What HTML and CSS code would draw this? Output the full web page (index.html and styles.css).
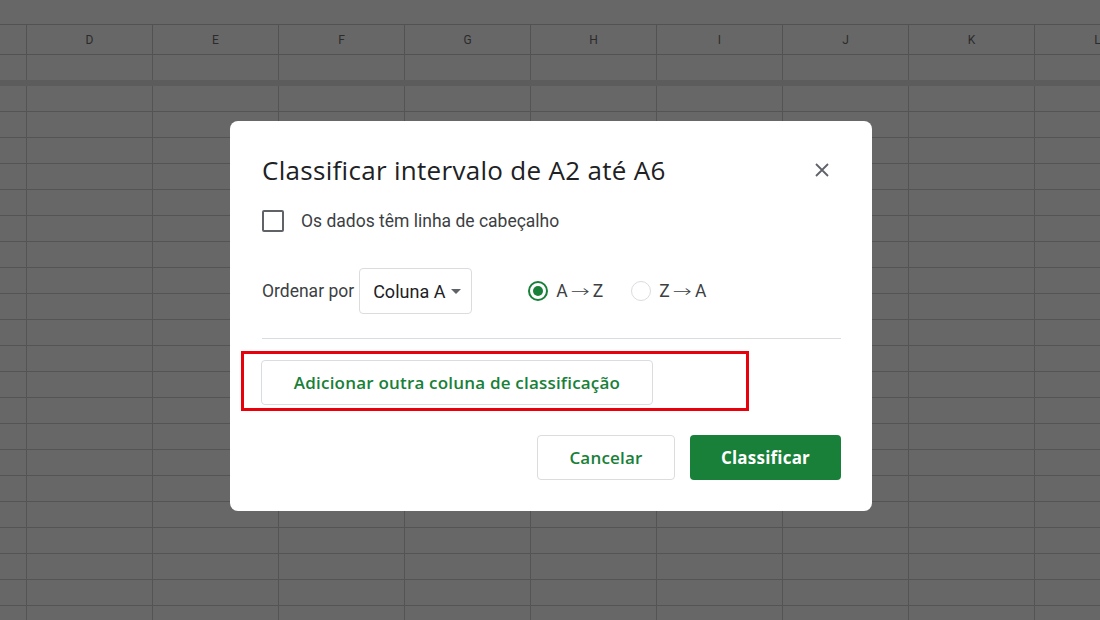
FILE: index.html
```html
<!DOCTYPE html>
<html lang="pt">
<head>
  <meta charset="UTF-8">
  <title>Classificar intervalo</title>
  <link rel="stylesheet" href="styles.css">
</head>
<body>
  <div class="sheet">
    <div class="topbar"></div>
    <div class="colhead">
      <div class="col first"></div>
      <div class="col">D</div>
      <div class="col">E</div>
      <div class="col">F</div>
      <div class="col">G</div>
      <div class="col">H</div>
      <div class="col">I</div>
      <div class="col">J</div>
      <div class="col">K</div>
      <div class="col">L</div>
    </div>
    <div class="frozen-row"></div>
    <div class="freeze-bar"></div>
    <div class="rows"></div>
  </div>

  <div class="dialog">
    <div class="dialog-head">
      <h1>Classificar intervalo de A2 até A6</h1>
      <button class="close" aria-label="Fechar">
        <svg width="14" height="14" viewBox="0 0 14 14"><path d="M1 1 L13 13 M13 1 L1 13" stroke="#5f6368" stroke-width="1.8" fill="none"/></svg>
      </button>
    </div>

    <label class="check">
      <span class="box"></span>
      <span>Os dados têm linha de cabeçalho</span>
    </label>

    <div class="sort-row">
      <span class="sort-label">Ordenar por</span>
      <div class="select">
        <span>Coluna A</span>
        <span class="caret"></span>
      </div>
      <div class="radios">
        <label class="radio on"><span class="dot"></span>A<span class="arrow">→</span>Z</label>
        <label class="radio"><span class="dot"></span>Z<span class="arrow">→</span>A</label>
      </div>
    </div>

    <div class="divider"></div>

    <div class="add-wrap">
      <button class="btn add">Adicionar outra coluna de classificação</button>
    </div>

    <div class="actions">
      <button class="btn cancel">Cancelar</button>
      <button class="btn primary">Classificar</button>
    </div>
  </div>
</body>
</html>
```

FILE: styles.css
```css
body {
  margin: 0;
  width: 1100px;
  height: 620px;
  overflow: hidden;
  background: #676767;
  font-family: Roboto, "Liberation Sans", sans-serif;
  position: relative;
}

/* planilha ao fundo (já escurecida) */
.sheet {
  width: 1100px;
  overflow: hidden;
}
.topbar {
  height: 24px;
}
.colhead {
  display: flex;
  height: 31px;
  overflow: hidden;
  border-top: 1px solid #525252;
  border-bottom: 1px solid #525252;
  box-sizing: border-box;
}
.col {
  flex: 0 0 126px;
  box-sizing: border-box;
  border-right: 1px solid #525252;
  display: flex;
  align-items: center;
  justify-content: center;
  font-size: 12px;
  color: #2b2b2b;
}
.col.first {
  flex-basis: 27px;
}
.frozen-row {
  height: 25px;
  background-image:
    repeating-linear-gradient(90deg, #545454 0 1px, transparent 1px 126px);
  background-position: 26px 0;
}
.freeze-bar {
  height: 6px;
  background: #5c5c5c;
}
.rows {
  height: 540px;
  background-image:
    repeating-linear-gradient(90deg, #545454 0 1px, transparent 1px 126px),
    repeating-linear-gradient(180deg, transparent 0 25px, #545454 25px 26px);
  background-position: 26px 0, 0 0;
}

/* caixa de diálogo */
.dialog {
  position: absolute;
  left: 230px;
  top: 121px;
  width: 642px;
  height: 390px;
  box-sizing: border-box;
  background: #fff;
  border-radius: 8px;
  padding: 29px 31px 0 32px;
  color: #3c4043;
}
.dialog-head {
  display: flex;
  justify-content: space-between;
  align-items: center;
  height: 40px;
}
.dialog-head h1 {
  margin: 0;
  font-family: "Open Sans", sans-serif;
  font-weight: 400;
  font-size: 26px;
  letter-spacing: 0.3px;
  color: #202124;
}
.close {
  border: none;
  background: none;
  padding: 0;
  margin-right: 12px;
  width: 14px;
  height: 14px;
  display: flex;
}

.check {
  display: flex;
  align-items: center;
  margin-top: 20px;
  font-size: 17.5px;
  color: #3c4043;
}
.box {
  width: 18px;
  height: 18px;
  border: 2px solid #5f6368;
  border-radius: 2px;
  margin-right: 17px;
}

.sort-row {
  display: flex;
  align-items: center;
  margin-top: 36px;
}
.sort-label {
  font-size: 17.5px;
  margin-right: 5px;
}
.select {
  display: flex;
  align-items: center;
  height: 46px;
  width: 113px;
  box-sizing: border-box;
  border: 1px solid #dadce0;
  border-radius: 4px;
  padding: 0 10px 0 13px;
  font-size: 18px;
  color: #202124;
  justify-content: space-between;
}
.caret {
  width: 0;
  height: 0;
  border-left: 5px solid transparent;
  border-right: 5px solid transparent;
  border-top: 5px solid #5f6368;
}
.radios {
  display: flex;
  margin-left: 56px;
  gap: 28px;
}
.radio {
  display: flex;
  align-items: center;
  font-size: 17.5px;
  color: #3c4043;
}
.arrow {
  display: inline-block;
  font-family: "DejaVu Sans", sans-serif;
  font-size: 17px;
  font-weight: 300;
  transform: scaleX(1.35);
  margin: 0 6px 0 5px;
}
.dot {
  width: 20px;
  height: 20px;
  box-sizing: border-box;
  border: 1px solid #dadce0;
  border-radius: 50%;
  margin-right: 8px;
  position: relative;
}
.radio.on .dot {
  border: 2px solid #188038;
}
.radio.on .dot::after {
  content: "";
  position: absolute;
  left: 3px;
  top: 3px;
  width: 10px;
  height: 10px;
  border-radius: 50%;
  background: #188038;
}

.divider {
  height: 1px;
  background: #dadce0;
  margin-top: 24px;
}

.add-wrap {
  margin: 12px 0 0 -21px;
  width: 508px;
  height: 60px;
  box-sizing: border-box;
  border: 3px solid #e8000b;
  padding: 6px 0 0 17px;
}
.btn {
  font-family: "Open Sans", sans-serif;
  font-size: 17px;
  font-weight: 600;
  letter-spacing: 0.2px;
  border-radius: 4px;
  cursor: pointer;
}
.add {
  width: 392px;
  height: 45px;
  background: #fff;
  border: 1px solid #dadce0;
  color: #188038;
}

.actions {
  display: flex;
  justify-content: flex-end;
  gap: 15px;
  margin-top: 24px;
}
.cancel {
  width: 138px;
  height: 45px;
  background: #fff;
  border: 1px solid #dadce0;
  color: #188038;
}
.primary {
  width: 151px;
  height: 45px;
  background: #188038;
  border: none;
  color: #fff;
  font-weight: 700;
}
```
